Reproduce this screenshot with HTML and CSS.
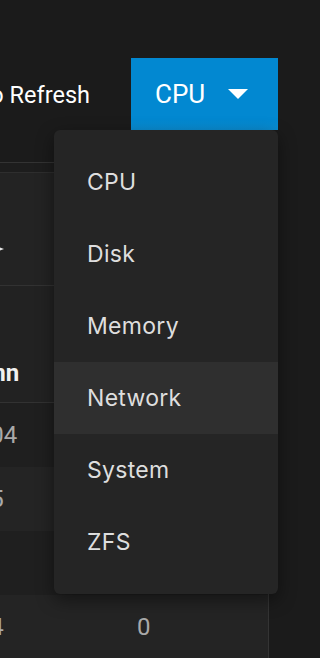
FILE: index.html
```html
<!DOCTYPE html>
<html lang="en">
<head>
<meta charset="utf-8">
<title>Reporting</title>
<link rel="stylesheet" href="styles.css">
</head>
<body>
<div class="page">
  <div class="toolbar">
    <span class="auto">Auto Refresh</span>
    <button class="select-btn" type="button">
      <span class="select-label">CPU</span>
      <svg class="caret" width="20" height="10" viewBox="0 0 20 10"><polygon points="0,0 20,0 10,10" fill="#fff"/></svg>
    </button>
  </div>

  <div class="content">
    <div class="band"></div>
    <div class="card">
      <div class="card-tools">
        <svg class="sort-icon" width="10" height="8" viewBox="0 0 10 8"><polygon points="0,0 10,4 0,8" fill="#e8e8e8"/></svg>
      </div>
      <div class="thead">
        <div class="cell c1">Column</div>
        <div class="cell c2"></div>
      </div>
      <div class="row dark">
        <div class="cell c1">12.04</div>
        <div class="cell c2"></div>
      </div>
      <div class="row">
        <div class="cell c1">10.5</div>
        <div class="cell c2"></div>
      </div>
      <div class="row dark">
        <div class="cell c1"></div>
        <div class="cell c2"></div>
      </div>
      <div class="row">
        <div class="cell c1">10.4</div>
        <div class="cell c2">0</div>
      </div>
    </div>
  </div>

  <ul class="menu">
    <li class="menu-item">CPU</li>
    <li class="menu-item">Disk</li>
    <li class="menu-item">Memory</li>
    <li class="menu-item active">Network</li>
    <li class="menu-item">System</li>
    <li class="menu-item">ZFS</li>
  </ul>
</div>
</body>
</html>
```

FILE: styles.css
```css
* { box-sizing: border-box; }

html, body {
  margin: 0;
  padding: 0;
  background: #1b1b1b;
  height: 658px;
  overflow: hidden;
  font-family: Roboto, "Liberation Sans", sans-serif;
}

.page {
  position: relative;
  width: 306px;
  height: 658px;
  padding-top: 58px;
  overflow: hidden;
}

.toolbar {
  display: flex;
  justify-content: flex-end;
  align-items: center;
  height: 72px;
  padding-right: 28px;
  gap: 41px;
}

.auto {
  color: #ffffff;
  font-size: 23.5px;
  white-space: nowrap;
  padding-top: 1px;
}

.select-btn {
  flex: 0 0 147px;
  height: 72px;
  border: 0;
  margin: 0;
  background: linear-gradient(#0288d1 85%, #0a8dd3);
  color: #ffffff;
  display: flex;
  align-items: center;
  padding: 0 0 0 24px;
  font-family: Roboto, "Liberation Sans", sans-serif;
  font-size: 26px;
}

.select-label {
  line-height: 1;
}

.caret {
  margin-left: 23px;
  display: block;
}

.content {
  margin-top: 32px;
  border-top: 1px solid #333333;
  margin-left: -100px;
  width: 369px;
}

.band {
  height: 10px;
  background: #1d1d1d;
  border-bottom: 1px solid #2e2e2e;
}

.card {
  background: #232323;
  border-right: 1px solid #343434;
}

.card-tools {
  height: 113px;
  border-bottom: 1px solid #323232;
  padding-top: 72px;
  padding-left: 94px;
}

.sort-icon {
  display: block;
}

.thead {
  display: flex;
  height: 117px;
  align-items: flex-end;
  padding-bottom: 15px;
  border-bottom: 1px solid #323232;
  background: #222222;
  color: #f0f0f0;
  font-weight: 700;
  font-size: 24px;
}

.thead .c1 {
  padding-left: 36px;
}

.row {
  display: flex;
  align-items: center;
  height: 64px;
  color: #a9a9a9;
  font-size: 24px;
  background: #242424;
}

.row.dark {
  background: #1f1f1f;
}

.cell {
  white-space: nowrap;
}

.c1 {
  width: 237px;
  padding-left: 57px;
}

.c2 {
  flex: 1;
}

.menu {
  position: absolute;
  left: 54px;
  top: 130px;
  width: 224px;
  margin: 0;
  padding: 16px 0;
  list-style: none;
  background: #252525;
  border-radius: 6px;
  box-shadow: 0 6px 18px rgba(0, 0, 0, 0.45);
}

.menu-item {
  height: 72px;
  display: flex;
  align-items: center;
  padding-left: 33px;
  font-family: Inter, "Noto Sans", sans-serif;
  font-size: 23px;
  letter-spacing: 0.3px;
  color: #dedede;
}

.menu-item.active {
  background: #2f2f2f;
}
```
